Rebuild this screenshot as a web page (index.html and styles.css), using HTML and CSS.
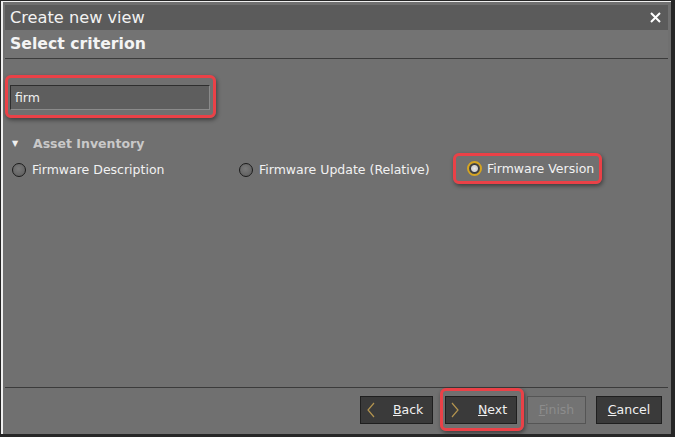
FILE: index.html
```
<!DOCTYPE html>
<html lang="en">
<head>
    <meta charset="UTF-8">
    <meta name="viewport" content="width=device-width, initial-scale=1.0">
    <title>Create new view</title>
    <link rel="stylesheet" href="styles.css">
</head>
<body>
    <div class="window">
        <div class="title-bar">
            <span class="title">Create new view</span>
            <svg class="close" width="11" height="11" viewBox="0 0 11 11"><path d="M1 1 L10 10 M10 1 L1 10" stroke="#ffffff" stroke-width="2"/></svg>
        </div>
        <div class="header">Select criterion</div>

        <div class="content">
            <div class="search-wrap highlight">
                <input class="search" type="text" value="firm">
            </div>

            <div class="group-title"><span class="arrow">&#9660;</span>Asset Inventory</div>

            <div class="options">
                <label class="option opt-1"><span class="radio"></span>Firmware Description</label>
                <label class="option opt-2"><span class="radio"></span>Firmware Update (Relative)</label>
                <label class="option opt-3 highlight"><span class="radio checked"></span>Firmware Version</label>
            </div>
        </div>

        <div class="footer">
            <button class="btn back-btn">
                <svg class="chev" width="8" height="16" viewBox="0 0 8 16"><path d="M7 1 L1 8 L7 15" fill="none" stroke="#b3944f" stroke-width="1.2"/></svg>
                <span><u>B</u>ack</span>
            </button>
            <div class="highlight next-wrap">
                <button class="btn next-btn">
                    <svg class="chev" width="8" height="16" viewBox="0 0 8 16"><path d="M1 1 L7 8 L1 15" fill="none" stroke="#b3944f" stroke-width="1.2"/></svg>
                    <span><u>N</u>ext</span>
                </button>
            </div>
            <button class="btn disabled"><span><u>F</u>inish</span></button>
            <button class="btn cancel-btn"><span><u>C</u>ancel</span></button>
        </div>
    </div>
</body>
</html>
```
FILE: styles.css
```
body {
    margin: 0;
    background-color: #262626;
    font-family: "DejaVu Sans", sans-serif;
    font-size: 12.5px;
    color: #f2f2f2;
}
.window {
    margin: 1px 0 0 1px;
    width: 670px;
    height: 433px;
    background-color: #707070;
    border-top: 1px solid #f0f0f0;
    border-left: 2px solid #f0f0f0;
    padding: 3px 3px 0 2px;
    box-sizing: border-box;
    display: flex;
    flex-direction: column;
}
.title-bar {
    height: 25px;
    flex: none;
    background-color: #5b5b5b;
    display: flex;
    align-items: center;
    justify-content: space-between;
    padding: 0 7px 0 5px;
}
.title {
    font-size: 16.2px;
    color: #f2f2f2;
}
.close {
    display: block;
}
.header {
    height: 28px;
    flex: none;
    background-color: #737373;
    border-bottom: 1px solid #3b3b3b;
    font-size: 15.7px;
    font-weight: bold;
    color: #f4f4f4;
    padding-left: 5px;
    line-height: 28px;
}
.content {
    flex: 1;
    padding-top: 16px;
}
.highlight {
    border: 3px solid #ea4147;
    border-radius: 6px;
    box-shadow: 1px 2px 4px rgba(0, 0, 0, 0.45);
}
.search-wrap {
    width: 211px;
    height: 43px;
    padding: 7px 4px 5px 2px;
    box-sizing: border-box;
}
.search {
    display: block;
    width: 200px;
    height: 25px;
    box-sizing: border-box;
    background-color: #5e5e5e;
    border: 1px solid #2e2e2e;
    border-right-color: #8a8a8a;
    border-bottom-color: #8a8a8a;
    color: #f0f0f0;
    font-family: "DejaVu Sans", sans-serif;
    font-size: 12.5px;
    padding: 0 4px;
    margin: 0;
}
.group-title {
    margin-top: 17px;
    margin-left: 7px;
    font-weight: bold;
    font-size: 12.5px;
    color: #c9c9c9;
    height: 18px;
    line-height: 18px;
}
.arrow {
    font-size: 8px;
    color: #f0f0f0;
    display: inline-block;
    width: 21px;
    vertical-align: 2px;
}
.options {
    display: flex;
    align-items: center;
    height: 31px;
}
.option {
    display: flex;
    align-items: center;
    height: 25px;
    box-sizing: border-box;
    padding-top: 2px;
}
.opt-1 {
    margin-left: 7px;
    width: 227px;
}
.opt-2 {
    width: 214px;
}
.opt-3 {
    width: 149px;
    padding-left: 11px;
    height: 31px;
    padding-top: 0;
}
.radio {
    width: 14px;
    height: 14px;
    border: 1px solid #1c1c1c;
    border-radius: 50%;
    background: radial-gradient(circle at 45% 40%, #7a7a7a, #5a5a5a);
    margin-right: 6px;
    box-sizing: border-box;
    flex: none;
}
.radio.checked {
    border: 2px solid #d6a521;
    background: radial-gradient(circle, #ececec 0, #cfcfcf 3px, #3a3a3a 4px, #555555 6px);
    width: 15px;
    height: 15px;
    margin-right: 5px;
}
.footer {
    height: 43px;
    flex: none;
    border-top: 1px solid #3b3b3b;
    display: flex;
    align-items: center;
    justify-content: flex-end;
    padding-right: 6px;
    margin-bottom: 3px;
}
.btn {
    height: 28px;
    box-sizing: border-box;
    background-color: #3a3a3a;
    border: 1px solid #1f1f1f;
    color: #f0f0f0;
    font-family: "DejaVu Sans", sans-serif;
    font-size: 12.5px;
    display: flex;
    align-items: center;
    justify-content: center;
    padding: 0;
    margin: 0;
    cursor: pointer;
    flex: none;
}
.btn .chev {
    flex: none;
    display: block;
}
.btn u {
    text-decoration-thickness: 1px;
}
.back-btn {
    width: 73px;
    justify-content: flex-start;
    padding-left: 6px;
}
.back-btn .chev {
    margin-right: 18px;
}
.next-wrap {
    margin-left: 7px;
    margin-right: 3px;
    padding: 0 4px 0 2px;
    height: 43px;
    display: flex;
    align-items: center;
    box-sizing: border-box;
}
.next-btn {
    width: 72px;
    justify-content: flex-start;
    padding-left: 5px;
}
.next-btn .chev {
    margin-right: 19px;
}
.btn.disabled {
    background-color: #737373;
    border-color: #555555;
    color: #8c8c8c;
    width: 59px;
}
.cancel-btn {
    width: 66px;
    margin-left: 10px;
}
```
